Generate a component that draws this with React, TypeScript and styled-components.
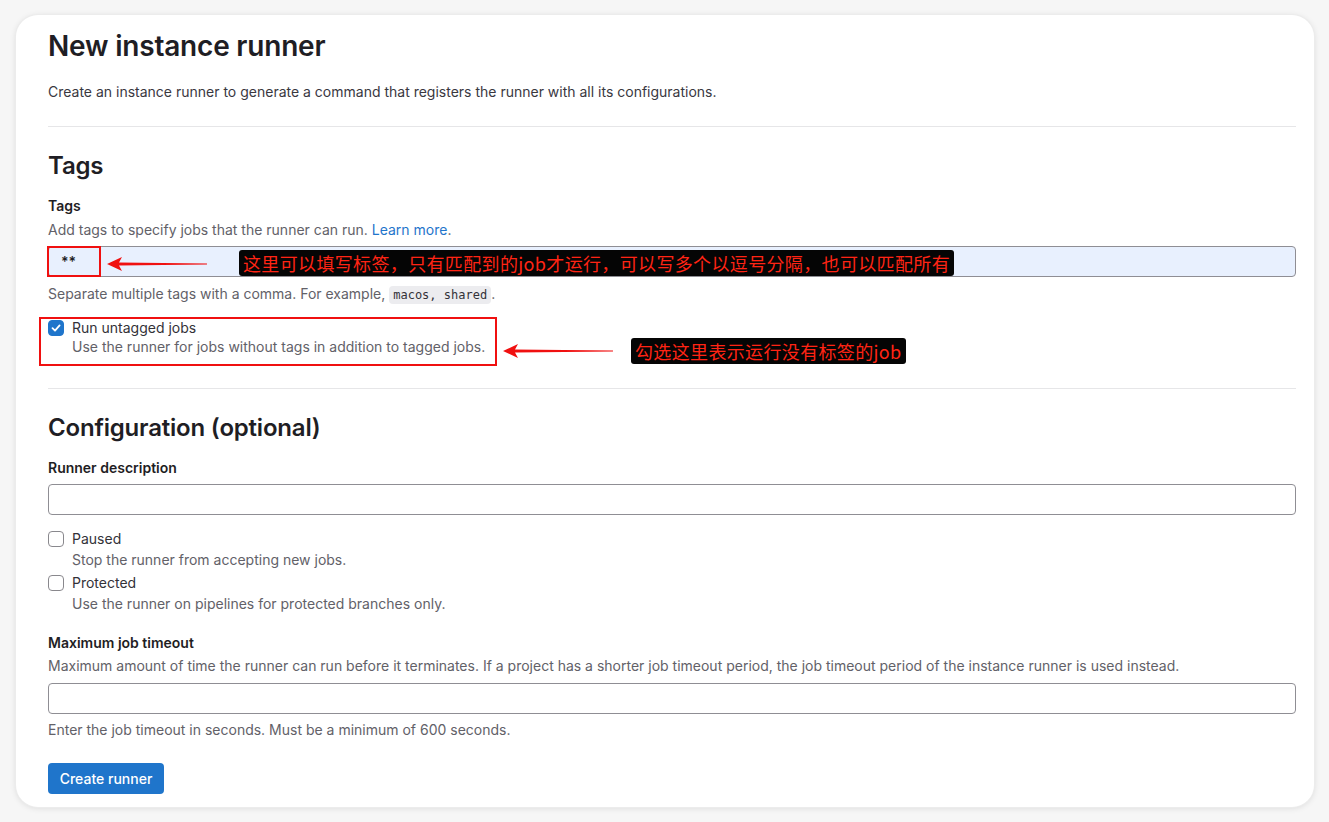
import React from "react";
import styled, { createGlobalStyle } from "styled-components";

const Global = createGlobalStyle`
  html, body { margin: 0; padding: 0; background: #f7f7f7; }
  body { font-family: Inter, "Noto Sans", "Liberation Sans", sans-serif; -webkit-font-smoothing: antialiased; }
  * { box-sizing: border-box; }
`;

const Page = styled.div`
  width: 1329px;
  height: 822px;
  padding: 15px 15px 15px 16px;
  background: #f6f6f6;
`;

const Card = styled.div`
  position: relative;
  width: 1298px;
  height: 792px;
  background: #fff;
  border-radius: 22px;
  box-shadow: 0 0 0 1px #ececec, 0 1px 6px rgba(0, 0, 0, 0.12);
  padding: 13px 18px 0 32px;
  display: flex;
  flex-direction: column;
  color: #333238;
`;

const Title = styled.h1`
  margin: 0;
  font-size: 28px;
  line-height: 36px;
  font-weight: 600;
  color: #1f1e24;
  letter-spacing: -0.2px;
`;

const Lead = styled.p`
  margin: 18px 0 0;
  font-size: 14px;
  line-height: 20px;
  color: #3a383f;
`;

const Divider = styled.hr<{ $top: number }>`
  margin: ${(p) => p.$top}px 0 0;
  border: 0;
  border-top: 1px solid #e6e6e8;
  height: 0;
`;

const SectionTitle = styled.h2`
  margin: 23px 0 0;
  font-size: 24px;
  line-height: 32px;
  font-weight: 600;
  color: #1f1e24;
  letter-spacing: -0.2px;
`;

const Label = styled.div<{ $top: number }>`
  margin-top: ${(p) => p.$top}px;
  font-size: 14px;
  line-height: 20px;
  font-weight: 600;
  color: #1f1e24;
`;

const Help = styled.div<{ $top: number }>`
  margin-top: ${(p) => p.$top}px;
  font-size: 14px;
  line-height: 20px;
  color: #626168;
`;

const Link = styled.a`
  color: #1f75cb;
  text-decoration: none;
`;

const Code = styled.code`
  font-family: "DejaVu Sans Mono", "Liberation Mono", monospace;
  font-size: 12px;
  background: #ececef;
  color: #333238;
  border-radius: 4px;
  padding: 2px 4px;
`;

const Input = styled.div<{ $top: number; $filled?: boolean }>`
  margin-top: ${(p) => p.$top}px;
  height: 31px;
  border: 1px solid #8f8e94;
  border-radius: 4px;
  background: ${(p) => (p.$filled ? "#e8f0fe" : "#fff")};
  padding: 0 12px;
  display: flex;
  align-items: center;
  font-size: 14px;
  font-weight: 600;
  color: #1f1e24;
`;

const CheckRow = styled.div<{ $top: number }>`
  margin-top: ${(p) => p.$top}px;
  display: grid;
  grid-template-columns: 24px 1fr;
  font-size: 14px;
  line-height: 20px;
`;

const Box = styled.span<{ $checked?: boolean }>`
  margin-top: 2px;
  width: 16px;
  height: 16px;
  border-radius: 4px;
  border: 1px solid ${(p) => (p.$checked ? "#1f75cb" : "#89888d")};
  background: ${(p) => (p.$checked ? "#1f75cb" : "#fff")};
  display: flex;
  align-items: center;
  justify-content: center;
`;

const CheckLabel = styled.span`
  color: #333238;
`;

const CheckDesc = styled.span<{ $gap?: number }>`
  grid-column: 2;
  margin-top: ${(p) => p.$gap ?? 1}px;
  color: #626168;
`;

const Button = styled.button`
  margin-top: 23px;
  align-self: flex-start;
  height: 31px;
  width: 116px;
  border: 0;
  border-radius: 4px;
  background: #1f75cb;
  color: #fff;
  font-family: inherit;
  font-size: 14px;
  font-weight: 500;
`;

const RedBox = styled.div<{ $x: number; $y: number; $w: number; $h: number }>`
  position: absolute;
  left: ${(p) => p.$x}px;
  top: ${(p) => p.$y}px;
  width: ${(p) => p.$w}px;
  height: ${(p) => p.$h}px;
  border: 2px solid #f01010;
`;

const Note = styled.div<{ $x: number; $y: number }>`
  position: absolute;
  left: ${(p) => p.$x}px;
  top: ${(p) => p.$y}px;
  height: 26px;
  padding: 0 4px;
  background: #050505;
  border-radius: 3px;
  color: #ff2414;
  font-family: "Noto Sans CJK SC", "Noto Sans", sans-serif;
  font-size: 18px;
  line-height: 26px;
  white-space: nowrap;
  letter-spacing: 0.35px;
`;

const ArrowSvg = styled.svg<{ $x: number; $y: number }>`
  position: absolute;
  left: ${(p) => p.$x}px;
  top: ${(p) => p.$y}px;
`;

const Arrow = ({ x, y, len }: { x: number; y: number; len: number }) => (
  <ArrowSvg $x={x} $y={y - 8} width={len} height={16} viewBox={`0 0 ${len} 16`}>
    <polygon points={`0,8 15,1 12,6.5 ${len},7.6 ${len},8.4 12,9.5 15,15`} fill="#f01010" />
  </ArrowSvg>
);

const Check = () => (
  <svg width="12" height="12" viewBox="0 0 12 12">
    <path d="M2.5 6.2 L5 8.6 L9.6 3.4" fill="none" stroke="#fff" strokeWidth="1.8" strokeLinecap="round" strokeLinejoin="round" />
  </svg>
);

export default function App() {
  return (
    <>
      <Global />
      <Page>
        <Card>
          <Title>New instance runner</Title>
          <Lead>Create an instance runner to generate a command that registers the runner with all its configurations.</Lead>
          <Divider $top={24} />
          <SectionTitle>Tags</SectionTitle>
          <Label $top={14}>Tags</Label>
          <Help $top={4}>
            Add tags to specify jobs that the runner can run. <Link>Learn more</Link>.
          </Help>
          <Input $top={6} $filled>**</Input>
          <Help $top={7}>
            Separate multiple tags with a comma. For example, <Code>macos, shared</Code>.
          </Help>
          <CheckRow $top={13}>
            <Box $checked>
              <Check />
            </Box>
            <CheckLabel>Run untagged jobs</CheckLabel>
            <CheckDesc $gap={-1}>Use the runner for jobs without tags in addition to tagged jobs.</CheckDesc>
          </CheckRow>
          <Divider $top={31} />
          <SectionTitle>Configuration (optional)</SectionTitle>
          <Label $top={14}>Runner description</Label>
          <Input $top={6} />
          <CheckRow $top={14}>
            <Box />
            <CheckLabel>Paused</CheckLabel>
            <CheckDesc>Stop the runner from accepting new jobs.</CheckDesc>
          </CheckRow>
          <CheckRow $top={3}>
            <Box />
            <CheckLabel>Protected</CheckLabel>
            <CheckDesc>Use the runner on pipelines for protected branches only.</CheckDesc>
          </CheckRow>
          <Label $top={19}>Maximum job timeout</Label>
          <Help $top={3}>
            Maximum amount of time the runner can run before it terminates. If a project has a shorter job timeout period, the job timeout period of the instance runner is used instead.
          </Help>
          <Input $top={7} />
          <Help $top={6}>Enter the job timeout in seconds. Must be a minimum of 600 seconds.</Help>
          <Button>Create runner</Button>

          <RedBox $x={31} $y={231} $w={54} $h={31} />
          <Arrow x={91} y={249} len={100} />
          <Note $x={223} $y={235}>这里可以填写标签，只有匹配到的job才运行，可以写多个以逗号分隔，也可以匹配所有</Note>
          <RedBox $x={23} $y={302} $w={458} $h={49} />
          <Arrow x={487} y={336} len={110} />
          <Note $x={615} $y={323}>勾选这里表示运行没有标签的job</Note>
        </Card>
      </Page>
    </>
  );
}
